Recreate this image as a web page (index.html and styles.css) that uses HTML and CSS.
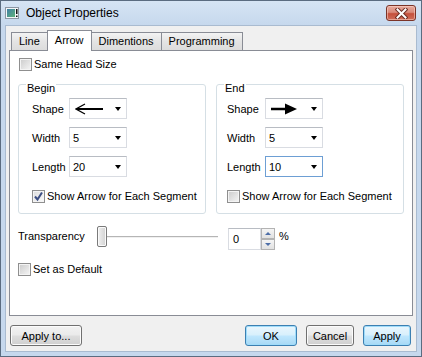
FILE: index.html
```html
<!DOCTYPE html>
<html lang="en">
<head>
    <meta charset="UTF-8">
    <title>Object Properties</title>
    <link rel="stylesheet" href="styles.css">
</head>
<body>
    <div class="window">
        <div class="titlebar">
            <svg class="app-icon" width="14" height="12" viewBox="0 0 14 12">
                <defs>
                    <linearGradient id="scr" x1="0" y1="0" x2="1" y2="1">
                        <stop offset="0" stop-color="#3f7fa6"/>
                        <stop offset="1" stop-color="#5fb27a"/>
                    </linearGradient>
                </defs>
                <rect x="0.5" y="0.5" width="13" height="11" fill="#f4f6f8" stroke="#8b96a3"/>
                <rect x="2" y="2" width="8" height="8" fill="url(#scr)"/>
                <rect x="11" y="2" width="1.5" height="5" fill="#111"/>
                <rect x="11" y="8.5" width="1.5" height="1.5" fill="#111"/>
            </svg>
            <span class="title">Object Properties</span>
            <button class="close">
                <svg width="13" height="11" viewBox="0 0 13 11">
                    <path d="M2.5 1.5 L10.5 9.5 M10.5 1.5 L2.5 9.5" stroke="#6b2d24" stroke-width="4" stroke-linecap="square"/>
                    <path d="M2.5 1.5 L10.5 9.5 M10.5 1.5 L2.5 9.5" stroke="#fff" stroke-width="2" stroke-linecap="square"/>
                </svg>
            </button>
        </div>

        <div class="client">
            <div class="tabs">
                <div class="tab">Line</div>
                <div class="tab active">Arrow</div>
                <div class="tab">Dimentions</div>
                <div class="tab">Programming</div>
            </div>

            <div class="panel">
                <label class="checkrow">
                    <span class="check"></span>Same Head Size
                </label>

                <div class="groups">
                    <fieldset class="group">
                        <legend>Begin</legend>
                        <div class="group-body">
                            <div class="field">
                                <span class="field-label">Shape</span>
                                <div class="combo">
                                    <svg class="shape" width="28" height="12" viewBox="0 0 28 12">
                                        <path d="M2 6 H28" stroke="#000" stroke-width="2"/>
                                        <path d="M10 1 L1 6 L10 11" fill="none" stroke="#000" stroke-width="1.2"/>
                                    </svg>
                                    <span class="drop"></span>
                                </div>
                            </div>
                            <div class="field">
                                <span class="field-label">Width</span>
                                <div class="combo"><span class="value">5</span><span class="drop"></span></div>
                            </div>
                            <div class="field">
                                <span class="field-label">Length</span>
                                <div class="combo"><span class="value">20</span><span class="drop"></span></div>
                            </div>
                            <label class="checkrow segment">
                                <span class="check checked">
                                    <svg width="11" height="11" viewBox="0 0 11 11">
                                        <path d="M2 5.5 L4.5 8.5 L9 1.5" fill="none" stroke="#3d4f83" stroke-width="2"/>
                                    </svg>
                                </span>Show Arrow for Each Segment
                            </label>
                        </div>
                    </fieldset>

                    <fieldset class="group group-end">
                        <legend>End</legend>
                        <div class="group-body">
                            <div class="field">
                                <span class="field-label">Shape</span>
                                <div class="combo">
                                    <svg class="shape" width="28" height="12" viewBox="0 0 28 12">
                                        <path d="M0 6 H16" stroke="#000" stroke-width="2.5"/>
                                        <path d="M14 0.5 L26 6 L14 11.5 Z" fill="#000"/>
                                    </svg>
                                    <span class="drop"></span>
                                </div>
                            </div>
                            <div class="field">
                                <span class="field-label">Width</span>
                                <div class="combo"><span class="value">5</span><span class="drop"></span></div>
                            </div>
                            <div class="field">
                                <span class="field-label">Length</span>
                                <div class="combo focused"><span class="value">10</span><span class="drop"></span></div>
                            </div>
                            <label class="checkrow segment">
                                <span class="check"></span>Show Arrow for Each Segment
                            </label>
                        </div>
                    </fieldset>
                </div>

                <div class="transparency">
                    <span class="transparency-label">Transparency</span>
                    <div class="slider">
                        <span class="thumb"></span>
                        <span class="track"></span>
                    </div>
                    <div class="spin">
                        <span class="spin-value">0</span>
                        <div class="spin-buttons">
                            <span class="spin-up"></span>
                            <span class="spin-down"></span>
                        </div>
                    </div>
                    <span class="percent">%</span>
                </div>

                <label class="checkrow default-row">
                    <span class="check"></span>Set as Default
                </label>
            </div>

            <div class="buttons">
                <button class="btn btn-apply-to">Apply to...</button>
                <div class="spacer"></div>
                <button class="btn btn-default btn-ok">OK</button>
                <button class="btn">Cancel</button>
                <button class="btn btn-default">Apply</button>
            </div>
        </div>
    </div>
</body>
</html>
```

FILE: styles.css
```css
* {
    box-sizing: border-box;
}

body {
    margin: 0;
    font-family: "Liberation Sans", Arial, sans-serif;
    font-size: 11px;
    color: #000;
    background: #fff;
}

.window {
    width: 422px;
    height: 357px;
    border: 1px solid #5b6c80;
    background: #c6d8ed;
    display: flex;
    flex-direction: column;
}

/* title bar */
.titlebar {
    height: 24px;
    display: flex;
    align-items: center;
    padding-left: 4px;
    background: linear-gradient(#d6e4f4, #c6d8ed);
}

.app-icon {
    flex: none;
}

.title {
    margin-left: 7px;
    font-size: 12px;
    flex: 1;
}

.close {
    align-self: flex-start;
    margin-top: 4px;
    margin-right: 5px;
    width: 30px;
    height: 16px;
    padding: 0;
    border: 1px solid #7b3428;
    border-radius: 3px;
    background: linear-gradient(#e7aa9d 0%, #d98a7a 45%, #c5503b 55%, #cf6e5a 100%);
    box-shadow: inset 0 0 0 1px rgba(255, 220, 210, 0.5);
    display: flex;
    align-items: center;
    justify-content: center;
}

/* client area */
.client {
    flex: 1;
    margin: 0 4px 4px;
    border: 1px solid #a9bbd0;
    background: #f0f0f0;
    padding: 4px 3px 5px;
    display: flex;
    flex-direction: column;
}

.tabs {
    height: 20px;
    display: flex;
    align-items: flex-end;
    margin-left: 2px;
}

.tab {
    height: 18px;
    line-height: 17px;
    padding: 0 7px;
    border: 1px solid #898c95;
    border-bottom: none;
    margin-right: -1px;
    background: linear-gradient(#f3f3f3, #e4e4e4 50%, #dcdcdc);
}

.tab.active {
    height: 21px;
    line-height: 19px;
    margin-bottom: -1px;
    background: #fff;
    position: relative;
    z-index: 1;
}

.panel {
    flex: 1;
    border: 1px solid #898c95;
    background: #fff;
    padding: 7px 8px 0;
}

/* checkboxes */
.checkrow {
    display: flex;
    align-items: center;
    gap: 2px;
    height: 13px;
    line-height: 13px;
    white-space: nowrap;
}

.checkrow:first-child {
    margin-left: 1px;
}

.check {
    width: 13px;
    height: 13px;
    border: 1px solid #8f8f8f;
    box-shadow: inset 0 0 0 1px #f4f4f4;
    background: linear-gradient(135deg, #cbcbcb, #f6f6f6);
    display: flex;
    align-items: center;
    justify-content: center;
    flex: none;
}

.check.checked {
    background: linear-gradient(135deg, #dcdcdc, #fbfbfb);
}

/* group boxes */
.groups {
    display: flex;
    gap: 10px;
    margin-top: 3px;
}

.group {
    flex: 1;
    margin: 0;
    min-width: 0;
    border: 1px solid #d5dfe5;
    border-radius: 3px;
    padding: 3px 8px 10px 7px;
}

.group legend {
    padding: 8px 1px 0;
    line-height: 13px;
}

.group-body {
    padding-left: 6px;
}

.group-end .group-body {
    padding-left: 3px;
}

.field {
    display: flex;
    align-items: center;
    height: 21px;
}

.field + .field {
    margin-top: 8px;
}

.field-label {
    width: 37px;
}

.group-end .field-label {
    width: 38px;
}

.combo {
    width: 58px;
    height: 21px;
    border: 1px solid #d9dce2;
    border-top-color: #b8bcc3;
    background: #fff;
    display: flex;
    align-items: center;
    padding: 0 5px 0 3px;
}

.combo.focused {
    border-color: #6d9fd4;
}

.combo .shape {
    margin-left: 2px;
}

.value {
    flex: 1;
}

.drop {
    margin-left: auto;
    width: 0;
    height: 0;
    border-top: 4px solid #000;
    border-left: 3.5px solid transparent;
    border-right: 3.5px solid transparent;
}

.segment {
    margin-top: 13px;
}

/* transparency row */
.transparency {
    display: flex;
    align-items: flex-start;
    margin-top: 12px;
}

.transparency-label {
    width: 79px;
    line-height: 21px;
}

.slider {
    width: 121px;
    height: 21px;
    display: flex;
    align-items: center;
}

.thumb {
    width: 10px;
    height: 21px;
    border: 1px solid #7a7a7a;
    border-radius: 2px;
    background: linear-gradient(90deg, #f2f2f2, #e0e0e0 50%, #d3d3d3);
    box-shadow: inset 0 0 0 1px #fafafa;
}

.track {
    flex: 1;
    height: 2px;
    border-top: 1px solid #b5b5b5;
    border-bottom: 1px solid #f0f0f0;
}

.spin {
    margin-left: 10px;
    margin-top: 2px;
    display: flex;
}

.spin-value {
    width: 33px;
    height: 22px;
    border: 1px solid #d9dce2;
    border-top-color: #b8bcc3;
    padding-left: 4px;
    line-height: 20px;
}

.spin-buttons {
    display: flex;
    flex-direction: column;
    width: 14px;
}

.spin-up,
.spin-down {
    height: 11px;
    border: 1px solid #b3b3b3;
    background: linear-gradient(#f5f5f5, #e1e1e1);
    display: flex;
    align-items: center;
    justify-content: center;
}

.spin-up::after {
    content: "";
    border-bottom: 3px solid #4d6ea8;
    border-left: 3px solid transparent;
    border-right: 3px solid transparent;
}

.spin-down::after {
    content: "";
    border-top: 3px solid #4d6ea8;
    border-left: 3px solid transparent;
    border-right: 3px solid transparent;
}

.percent {
    margin-left: 4px;
    line-height: 20px;
}

.default-row {
    margin-top: 13px;
}

/* dialog buttons */
.buttons {
    display: flex;
    gap: 9px;
    margin: 9px 2px 0 1px;
}

.spacer {
    flex: 1;
}

.btn {
    width: 48px;
    height: 21px;
    padding: 0;
    font-family: inherit;
    font-size: 11px;
    font-weight: normal;
    color: #000;
    border: 1px solid #707070;
    border-radius: 3px;
    background: linear-gradient(#f2f2f2 0%, #ebebeb 45%, #dddddd 55%, #cfcfcf 100%);
    box-shadow: inset 0 0 0 1px #fbfbfb;
}

.btn-apply-to {
    width: 72px;
}

.btn-ok {
    width: 52px;
}

.btn-default {
    border-color: #3c7fb1;
    background: linear-gradient(#eaf6fd 0%, #d9f0fc 45%, #bee6fd 55%, #a7d9f5 100%);
    box-shadow: inset 0 0 0 1px #9fdcfa;
}
```
